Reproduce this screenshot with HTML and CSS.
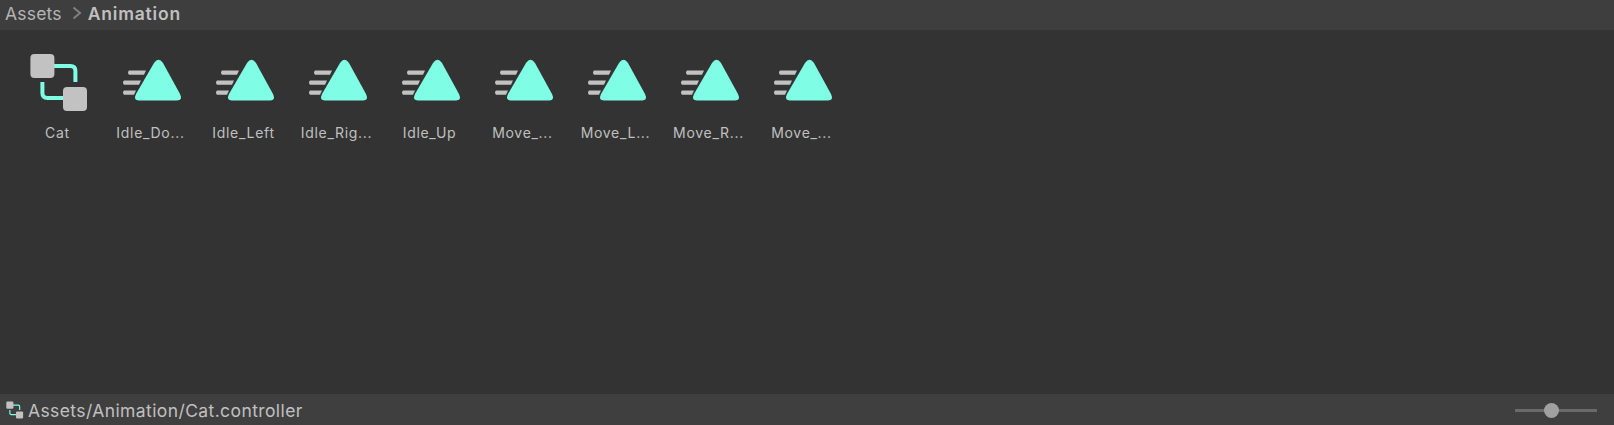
FILE: index.html
```html
<!DOCTYPE html>
<html lang="en">
<head>
    <meta charset="UTF-8">
    <title>Assets/Animation</title>
    <link rel="stylesheet" href="styles.css">
</head>
<body>
    <svg class="defs" width="0" height="0">
        <symbol id="controller" viewBox="0 0 64 64">
            <path d="M24 14H44.400Q49.400 14 49.400 19V30M16.400 30V41Q16.400 46 21.400 46H42" fill="none" stroke="#7ffde5" stroke-width="4"/>
            <rect x="4.400" y="2" width="24" height="24" rx="4" fill="#c2c2c2"/>
            <rect x="37" y="35" width="24" height="24" rx="4" fill="#c2c2c2"/>
        </symbol>
        <symbol id="clip" viewBox="0 0 64 64">
            <path d="M10 18.500H27L25 22.800H10Q8 20.500 10 18.500ZM5 28.500H22L20 32.800H5Q3 30.500 5 28.500ZM5 38.500H17L15 42.800H5Q3 40.500 5 38.500Z" fill="#c2c2c2"/>
            <path d="M35 11Q39.500 4.500 44 11L61 42Q64 48.500 58 48.500H20Q14 48.500 17 42Z" fill="#7ffde5"/>
        </symbol>
    </svg>

    <div class="breadcrumb">
        <span>Assets</span>
        <svg class="chevron" width="10" height="14" viewBox="0 0 10 14"><path d="M1.500 1.500L8 7L1.500 12.500" fill="none" stroke="#808080" stroke-width="2"/></svg>
        <b>Animation</b>
    </div>

    <div class="grid">
        <div class="asset"><svg class="icon"><use href="#controller"/></svg><span>Cat</span></div>
        <div class="asset"><svg class="icon"><use href="#clip"/></svg><span>Idle_Do...</span></div>
        <div class="asset"><svg class="icon"><use href="#clip"/></svg><span>Idle_Left</span></div>
        <div class="asset"><svg class="icon"><use href="#clip"/></svg><span>Idle_Rig...</span></div>
        <div class="asset"><svg class="icon"><use href="#clip"/></svg><span>Idle_Up</span></div>
        <div class="asset"><svg class="icon"><use href="#clip"/></svg><span>Move_...</span></div>
        <div class="asset"><svg class="icon"><use href="#clip"/></svg><span>Move_L...</span></div>
        <div class="asset"><svg class="icon"><use href="#clip"/></svg><span>Move_R...</span></div>
        <div class="asset"><svg class="icon"><use href="#clip"/></svg><span>Move_...</span></div>
    </div>

    <div class="footer">
        <svg class="small-icon"><use href="#controller"/></svg>
        <span class="path">Assets/Animation/Cat.controller</span>
        <div class="slider"><div class="knob"></div></div>
    </div>
</body>
</html>
```

FILE: styles.css
```css
html, body {
    height: 100%;
}

body {
    margin: 0;
    background-color: #333333;
    color: #c4c4c4;
    font-family: Inter, "Liberation Sans", sans-serif;
    display: flex;
    flex-direction: column;
    overflow: hidden;
}

.defs {
    display: none;
}

.breadcrumb {
    height: 26px;
    background-color: #3e3e3e;
    display: flex;
    align-items: center;
    padding: 0 0 4px 5px;
    font-size: 17.5px;
    letter-spacing: 0.2px;
    color: #b4b4b4;
}

.chevron {
    margin: 0 6px 0 10px;
}

.breadcrumb b {
    font-weight: 600;
    letter-spacing: 0.8px;
    color: #c0c0c0;
}

.grid {
    flex: 1;
    display: flex;
    align-items: flex-start;
    padding: 22px 0 0 11px;
}

.asset {
    width: 93px;
    display: flex;
    flex-direction: column;
    align-items: center;
    gap: 8px;
    font-size: 14px;
    letter-spacing: 0.7px;
    line-height: 17px;
    color: #c0c0c0;
}

.icon {
    width: 64px;
    height: 64px;
}

.footer {
    height: 31px;
    box-sizing: border-box;
    padding: 1px 0 0 5px;
    background-color: #3f3f3f;
    display: flex;
    align-items: center;
    font-size: 17.5px;
    letter-spacing: 0.4px;
    color: #c0c0c0;
}

.small-icon {
    width: 19px;
    height: 19px;
    margin-right: 4px;
}

.path {
    flex: 1;
}

.slider {
    width: 82px;
    height: 3px;
    background-color: #6a6a6a;
    margin-right: 17px;
    display: flex;
    align-items: center;
    justify-content: center;
}

.knob {
    width: 15px;
    height: 15px;
    border-radius: 50%;
    background-color: #a0a0a0;
    margin-right: 9px;
}
```
